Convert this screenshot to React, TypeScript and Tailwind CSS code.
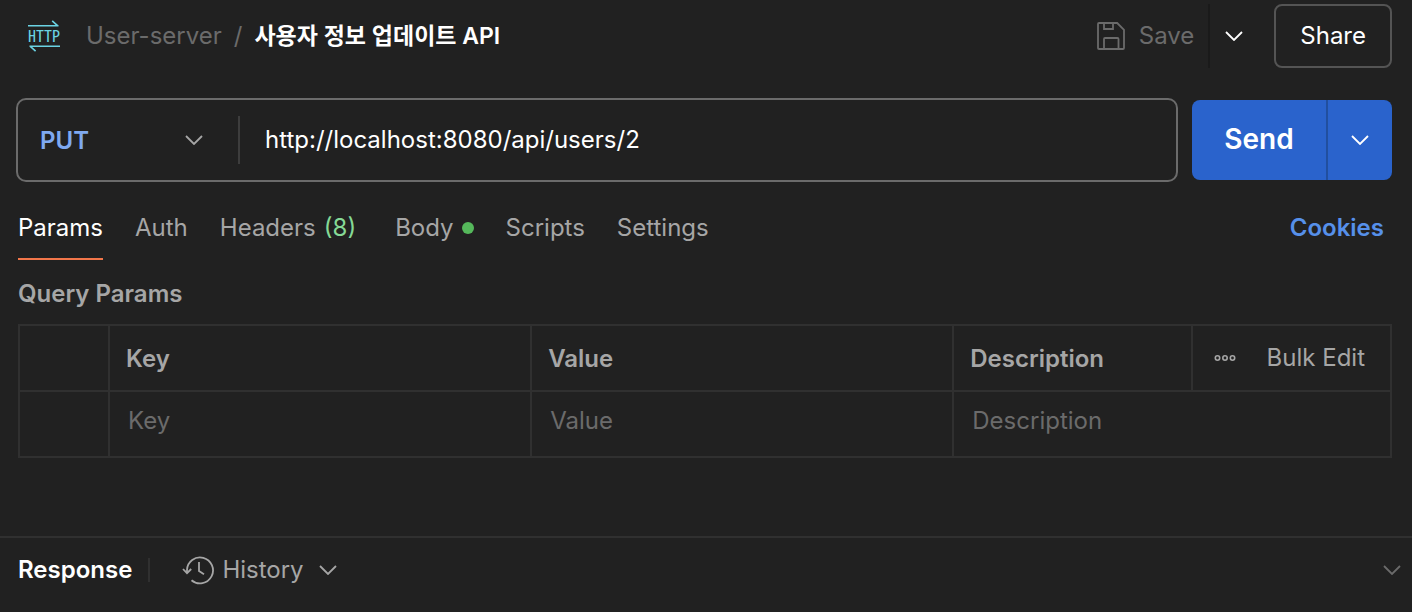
import React, { useState } from 'react';

const METHODS = ['GET', 'POST', 'PUT', 'PATCH', 'DELETE'];

const TABS = [
  { id: 'params', label: 'Params' },
  { id: 'auth', label: 'Auth' },
  { id: 'headers', label: 'Headers', count: 8 },
  { id: 'body', label: 'Body', dot: true },
  { id: 'scripts', label: 'Scripts' },
  { id: 'settings', label: 'Settings' },
];

const Chevron: React.FC<{ className?: string }> = ({ className = '' }) => (
  <svg width="18" height="10" viewBox="0 0 18 10" fill="none" className={className} aria-hidden="true">
    <path d="M1 1l8 8 8-8" stroke="currentColor" strokeWidth="1.8" />
  </svg>
);

const HttpIcon: React.FC = () => (
  <svg width="36" height="34" viewBox="0 0 36 34" fill="none" stroke="#6bd3e3" aria-hidden="true">
    <path d="M2 6.8h30.5M26.2 1.8l5.6 5" strokeWidth="1.6" />
    <path d="M34 27.2H3.5M9.6 32.2l-5.6-5" strokeWidth="1.6" />
    <text
      x="18"
      y="23"
      textAnchor="middle"
      stroke="none"
      fill="#6bd3e3"
      className="font-['Noto_Sans_Mono_CJK_KR','Liberation_Mono',monospace] text-[16px]"
    >
      HTTP
    </text>
  </svg>
);

const SaveIcon: React.FC = () => (
  <svg width="30" height="30" viewBox="0 0 30 30" fill="none" stroke="currentColor" strokeWidth="1.8" aria-hidden="true">
    <path d="M3 2h18.2L28 8.8V27a1 1 0 0 1-1 1H3a1 1 0 0 1-1-1V3a1 1 0 0 1 1-1z" />
    <path d="M8 2v6h9V2M8 28V18a1 1 0 0 1 1-1h12.500a1 1 0 0 1 1 1v10" />
  </svg>
);

const HistoryIcon: React.FC = () => (
  <svg width="32" height="30" viewBox="0 0 32 30" fill="none" stroke="currentColor" strokeWidth="1.8" aria-hidden="true">
    <path d="M5 17.500V15A13 13 0 1 1 9.500 25.200" />
    <path d="M1 14l4 4.200L9.200 14" />
    <path d="M17 7v9l5 3.200" />
  </svg>
);

const MoreIcon: React.FC = () => (
  <svg width="22" height="8" viewBox="0 0 22 8" fill="none" stroke="currentColor" strokeWidth="1.600" aria-hidden="true">
    <circle cx="3.500" cy="4" r="2.200" />
    <circle cx="11" cy="4" r="2.200" />
    <circle cx="18.500" cy="4" r="2.200" />
  </svg>
);

export default function App() {
  const [method, setMethod] = useState('PUT');
  const [url, setUrl] = useState('http://localhost:8080/api/users/2');
  const [activeTab, setActiveTab] = useState('params');

  const cell = 'border-2 border-[#303030] h-[66px] px-4 text-left';
  const field = 'block w-full bg-transparent px-[2px] pb-1.5 text-[#a6a6a6] placeholder:text-[#6b6b6b] focus:outline-none';

  return (
    <div className="flex min-h-screen flex-col bg-[#212121] font-['Inter','Noto_Sans_CJK_KR',sans-serif] text-2xl text-[#a6a6a6]">
      {/* Breadcrumb and actions */}
      <header className="flex items-center justify-between py-1 pr-5 pl-[26px]">
        <nav className="flex items-center" aria-label="Breadcrumb">
          <HttpIcon />
          <a href="#collection" className="ml-6 text-[#6b6b6b]">
            User-server
          </a>
          <span className="mx-3 text-[#6b6b6b]">/</span>
          <h1 className="text-[23px] leading-8 font-semibold text-white">사용자 정보 업데이트 API</h1>
        </nav>
        <div className="flex h-16 items-center">
          <button type="button" className="flex items-center gap-[13px] pr-[14px] text-[#6b6b6b]">
            <SaveIcon />
            Save
          </button>
          <button
            type="button"
            aria-label="Save options"
            className="flex h-16 w-[50px] items-center justify-center border-l-2 border-[#1a1a1a] text-white"
          >
            <Chevron />
          </button>
          <button type="button" className="ml-4 h-16 rounded-lg border-2 border-[#545454] px-6 text-white">
            Share
          </button>
        </div>
      </header>

      {/* Method, URL and send */}
      <div className="mt-[26px] flex items-center gap-[14px] pr-5 pl-4">
        <div className="flex h-[84px] flex-1 items-center rounded-[10px] border-2 border-[#6b6b6b]">
          <div className="relative">
            <select
              aria-label="HTTP method"
              value={method}
              onChange={(e) => setMethod(e.target.value)}
              className="h-12 w-[222px] appearance-none border-r-2 border-[#3d3d3d] pt-[2px] pl-[22px] font-semibold text-[#7fa9f0] focus:outline-none"
            >
              {METHODS.map((m) => (
                <option key={m} value={m}>
                  {m}
                </option>
              ))}
            </select>
            <Chevron className="pointer-events-none absolute top-[19px] right-[37px]" />
          </div>
          <input
            type="text"
            aria-label="Request URL"
            value={url}
            onChange={(e) => setUrl(e.target.value)}
            className="h-12 min-w-0 flex-1 bg-transparent px-[25px] pb-[2px] text-white focus:outline-none"
          />
        </div>
        <div className="flex h-20 overflow-hidden rounded-lg bg-[#2a63cc] text-white">
          <button type="button" className="w-[134px] text-[28px] font-semibold">
            Send
          </button>
          <button
            type="button"
            aria-label="Send options"
            className="flex w-[66px] items-center justify-center border-l-2 border-[#214f9f]"
          >
            <Chevron />
          </button>
        </div>
      </div>

      {/* Request tabs */}
      <div className="mt-[14px] flex items-center justify-between pr-7 pl-[18px]">
        <div role="tablist" className="flex gap-8">
          {TABS.map((tab) => (
            <button
              key={tab.id}
              type="button"
              role="tab"
              aria-selected={activeTab === tab.id}
              onClick={() => setActiveTab(tab.id)}
              className={`flex h-16 items-center gap-2 border-y-2 border-t-transparent ${
                activeTab === tab.id ? 'border-b-[#f2764a] text-white' : 'border-b-transparent'
              }`}
            >
              {tab.label}
              {tab.count && <span className="pr-[7px] text-[#85d996]">({tab.count})</span>}
              {tab.dot && <span className="size-3 rounded-full bg-[#55b85b]" />}
            </button>
          ))}
        </div>
        <a href="#cookies" className="font-semibold text-[#5690ea]">
          Cookies
        </a>
      </div>

      {/* Query params */}
      <section className="pt-4 pr-5 pl-[18px]">
        <h2 className="pt-[2px] leading-8 font-semibold">Query Params</h2>
        <table className="mt-[14px] w-full table-fixed border-collapse">
          <colgroup>
            <col className="w-[90px]" />
            <col className="w-4/13" />
            <col className="w-4/13" />
            <col />
            <col className="w-[199px]" />
          </colgroup>
          <thead>
            <tr>
              <td className={cell} />
              <th scope="col" className={`${cell} pt-[2px] font-semibold`}>
                Key
              </th>
              <th scope="col" className={`${cell} pt-[2px] font-semibold`}>
                Value
              </th>
              <th scope="col" className={`${cell} pt-[2px] font-semibold`}>
                Description
              </th>
              <td className={cell}>
                <div className="flex items-center justify-between px-[5px]">
                  <button type="button" aria-label="More options">
                    <MoreIcon />
                  </button>
                  <button type="button" className="mr-1">
                    Bulk Edit
                  </button>
                </div>
              </td>
            </tr>
          </thead>
          <tbody>
            <tr>
              <td className={cell} />
              <td className={cell}>
                <input type="text" aria-label="Key" placeholder="Key" className={field} />
              </td>
              <td className={cell}>
                <input type="text" aria-label="Value" placeholder="Value" className={field} />
              </td>
              <td className={cell} colSpan={2}>
                <input type="text" aria-label="Description" placeholder="Description" className={field} />
              </td>
            </tr>
          </tbody>
        </table>
      </section>

      {/* Response bar */}
      <footer className="mt-auto flex h-[76px] items-center border-t-2 border-[#303030] pr-[11px] pb-[10px] pl-[18px]">
        <h2 className="font-semibold text-white">Response</h2>
        <span className="ml-4 h-6 w-[2px] bg-[#303030]" />
        <button type="button" className="ml-8 flex items-center">
          <HistoryIcon />
          <span className="mr-[15px] ml-2">History</span>
          <Chevron />
        </button>
        <button type="button" aria-label="Toggle response panel" className="ml-auto text-[#6b6b6b]">
          <Chevron />
        </button>
      </footer>
    </div>
  );
}
